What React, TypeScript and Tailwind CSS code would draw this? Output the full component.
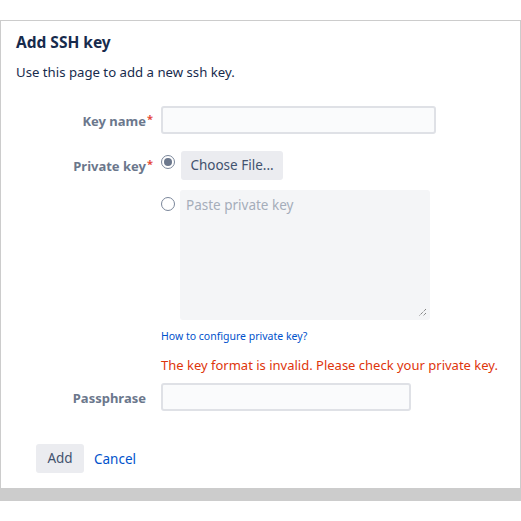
import React from "react";

function Radio({ checked }: { checked?: boolean }) {
  return (
    <span className="flex h-[14px] w-[14px] shrink-0 items-center justify-center rounded-full border border-[#7a869a] bg-white">
      {checked && <span className="h-[8px] w-[8px] rounded-full bg-[#6b778c]" />}
    </span>
  );
}

export default function App() {
  return (
    <div className="h-[521px] w-[521px] bg-white pt-[20px] font-['Noto_Sans',sans-serif] text-[#172b4d]">
      <div className="h-[468px] w-[521px] border border-b-0 border-[#cccccc] bg-white">
        <h1 className="ml-[15px] mt-[11px] text-[15.5px] font-bold leading-[20px]">Add SSH key</h1>
        <p className="ml-[15px] mt-[10px] text-[13.2px] leading-[20px]">Use this page to add a new ssh key.</p>

        <div className="mt-[24px] flex flex-col">
          <div className="flex items-center">
            <div className="relative mt-[3px] w-[145px] text-right text-[13px] font-bold text-[#6b778c]">
              Key name<span className="absolute left-full top-[-1px] ml-[1px] text-[11px] text-[#e5493a]">*</span>
            </div>
            <div className="ml-[15px] h-[28px] w-[275px] rounded-[3px] border-2 border-[#dfe1e6] bg-[#fafbfc]" />
          </div>

          <div className="mt-[17px] flex items-start">
            <div className="relative mt-[6px] w-[145px] text-right text-[13px] font-bold text-[#6b778c]">
              Private key<span className="absolute left-full top-[-1px] ml-[1px] text-[11px] text-[#e5493a]">*</span>
            </div>
            <div className="ml-[15px] flex flex-col">
              <div className="flex items-start">
                <div className="mt-[4px]"><Radio checked /></div>
                <button className="ml-[6px] h-[29px] w-[102px] rounded-[3px] bg-[#ebecf0] text-[13.5px] text-[#42526e]">Choose File...</button>
              </div>
              <div className="mt-[10px] flex items-start">
                <div className="mt-[7px]"><Radio /></div>
                <div className="relative ml-[5px] h-[130px] w-[250px] rounded-[3px] bg-[#f4f5f7] px-[6px] pt-[5px] text-[13.5px] text-[#a5adba]">
                  Paste private key
                  <svg className="absolute bottom-[3px] right-[3px]" width="10" height="10" viewBox="0 0 10 10">
                    <path d="M9 2 L2 9 M9 6 L6 9" stroke="#555" strokeWidth="1" strokeDasharray="1 1" />
                  </svg>
                </div>
              </div>
              <a className="mt-[8px] text-[10.5px] leading-[16px] text-[#0052cc]">How to configure private key?</a>
              <p className="mt-[12px] text-[13px] leading-[18px] text-[#de350b]">The key format is invalid. Please check your private key.</p>
            </div>
          </div>

          <div className="mt-[9px] flex items-center">
            <div className="mt-[3px] w-[145px] text-right text-[13px] font-bold text-[#6b778c]">Passphrase</div>
            <div className="ml-[15px] h-[28px] w-[250px] rounded-[3px] border-2 border-[#dfe1e6] bg-[#fafbfc]" />
          </div>

          <div className="ml-[35px] mt-[33px] flex items-center">
            <button className="h-[29px] w-[48px] rounded-[3px] bg-[#ebecf0] text-[13.5px] text-[#42526e]">Add</button>
            <a className="ml-[10px] mt-[2px] text-[13.5px] text-[#0052cc]">Cancel</a>
          </div>
        </div>
      </div>
      <div className="h-[13px] w-[521px] bg-[#cccccc]" />
    </div>
  );
}
